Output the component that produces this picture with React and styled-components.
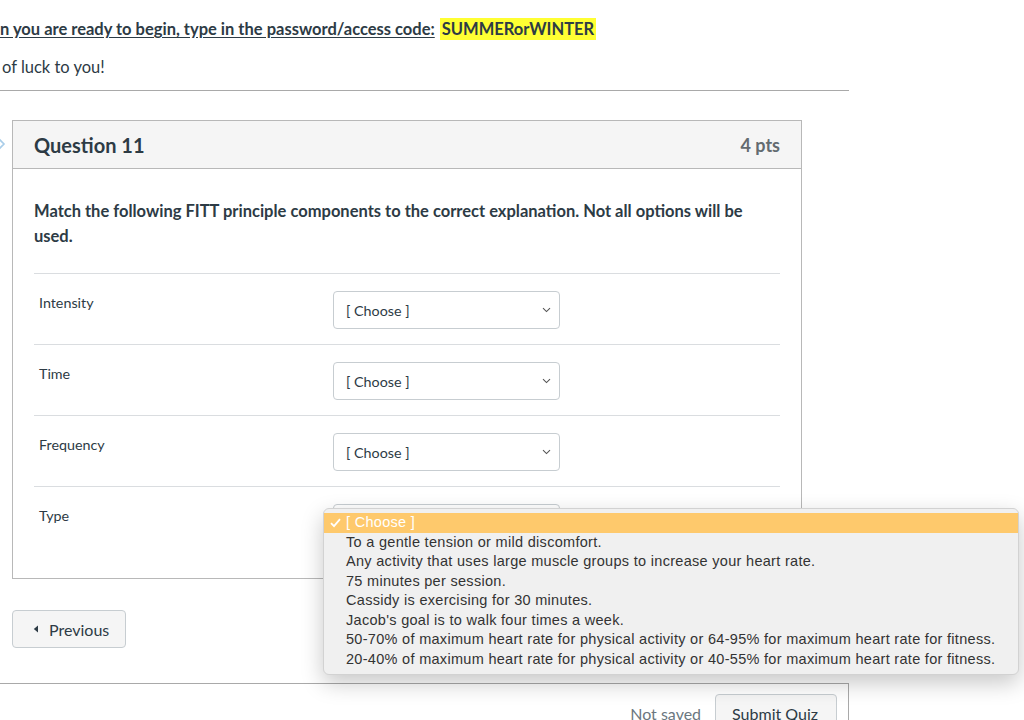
import React from "react";
import styled, { createGlobalStyle } from "styled-components";

const GlobalStyle = createGlobalStyle`
  html, body {
    margin: 0;
    padding: 0;
    background: #fff;
  }
  body {
    font-family: Lato, "Open Sans", "Liberation Sans", sans-serif;
    color: #2d3b45;
    overflow: hidden;
  }
`

const Page = styled.div`
  width: 849px;
  height: 720px;
  overflow: visible;
`

const Intro = styled.p`
  margin: 17px 0 0;
  font-size: 16.5px;
  line-height: 24px;
  font-weight: 700;
  white-space: nowrap;
`

const Underlined = styled.span`
  text-decoration: underline;
  text-underline-offset: 2px;
`

const Highlight = styled.span`
  background: #ffff33;
  padding: 1px 2px;
  margin-left: 5px;
`

const Luck = styled.p`
  margin: 14px 0 0;
  padding-left: 2px;
  font-size: 16.5px;
  line-height: 24px;
`

const Rule = styled.hr`
  margin: 11px 0 0;
  border: 0;
  border-top: 1px solid #a9a9a9;
`

const Card = styled.section`
  position: relative;
  margin: 29px 0 0 12px;
  width: 790px;
  box-sizing: border-box;
  border: 1px solid #b8b8b8;
`

const FlagMark = styled.svg`
  position: absolute;
  left: -17px;
  top: 15px;
`

const Header = styled.header`
  display: flex;
  align-items: center;
  justify-content: space-between;
  height: 47px;
  padding: 0 21px;
  background: #f5f5f5;
  border-bottom: 1px solid #b8b8b8;
`

const Title = styled.h2`
  margin: 0;
  font-size: 20px;
  font-weight: 700;
  color: #2d3b45;
`

const Points = styled.span`
  font-size: 18px;
  font-weight: 700;
  color: #636b70;
`

const Body = styled.div`
  padding: 30px 21px 21px;
`

const Prompt = styled.p`
  margin: 0 0 24px;
  font-size: 16.5px;
  line-height: 25px;
  font-weight: 700;
  padding-right: 20px;
`

const Row = styled.div`
  position: relative;
  display: flex;
  align-items: flex-start;
  box-sizing: border-box;
  height: 71px;
  padding: 17px 0 16px 5px;
  border-top: 1px solid #dadde0;
`

const Label = styled.div`
  width: 294px;
  padding-top: 2px;
  font-size: 14.3px;
  line-height: 20px;
`

const Select = styled.div`
  position: relative;
  display: flex;
  align-items: center;
  justify-content: space-between;
  box-sizing: border-box;
  width: 227px;
  height: 38px;
  padding: 0 8px 0 12px;
  border: 1px solid #c7cdd1;
  border-radius: 4px;
  background: #fff;
  font-size: 14.3px;
`

const Value = styled.span`
  visibility: ${(props) => (props.covered ? "hidden" : "visible")};
`

const Menu = styled.ul`
  position: absolute;
  left: -11px;
  top: 3px;
  z-index: 5;
  width: 696px;
  margin: 0;
  padding: 4px 0 5px;
  list-style: none;
  box-sizing: border-box;
  background: #f0f0f0;
  border: 1px solid #d2d2d2;
  border-radius: 6px;
  box-shadow: 0 8px 22px rgba(0, 0, 0, 0.22);
  font-family: "Liberation Sans", Arial, sans-serif;
  font-size: 14.5px;
  letter-spacing: 0.3px;
`

const Option = styled.li`
  position: relative;
  height: 19.5px;
  line-height: 19.5px;
  padding-left: 22px;
  white-space: nowrap;
  color: ${(props) => (props.selected ? "#fff" : "#333")};
  background: ${(props) => (props.selected ? "#fec96c" : "transparent")};
`

const Check = styled.svg`
  position: absolute;
  left: 6px;
  top: 5px;
`

const Nav = styled.div`
  margin: 31px 0 0 12px;
`

const Button = styled.button`
  display: inline-flex;
  align-items: center;
  gap: 10px;
  box-sizing: border-box;
  height: 38px;
  padding: 0 ${(props) => (props.wide ? "18px" : "16px")} 0 ${(props) => (props.wide ? "16px" : "20px")};
  background: #f5f5f5;
  border: 1px solid #c7cdd1;
  border-radius: 4px;
  font-family: Lato, "Open Sans", sans-serif;
  font-size: 16px;
  color: #2d3b45;
`

const Footer = styled.div`
  display: flex;
  align-items: flex-start;
  justify-content: flex-end;
  gap: 14px;
  height: 60px;
  margin-top: 35px;
  padding: 10px 11px 0 0;
  border-top: 1px solid #a9a9a9;
  border-right: 1px solid #a9a9a9;
`

const Status = styled.span`
  padding-top: 10px;
  font-size: 16px;
  color: #6b7780;
`

const Chevron = () => (
  <svg width="9" height="6" viewBox="0 0 9 6">
    <path d="M1 1.2 L4.5 4.6 L8 1.2" fill="none" stroke="#555" strokeWidth="1.1" />
  </svg>
)

const options = [
  "To a gentle tension or mild discomfort.",
  "Any activity that uses large muscle groups to increase your heart rate.",
  "75 minutes per session.",
  "Cassidy is exercising for 30 minutes.",
  "Jacob's goal is to walk four times a week.",
  "50-70% of maximum heart rate for physical activity or 64-95% for maximum heart rate for fitness.",
  "20-40% of maximum heart rate for physical activity or 40-55% for maximum heart rate for fitness.",
]

const rows = ["Intensity", "Time", "Frequency", "Type"]

export default function App() {
  return (
    <Page>
      <GlobalStyle />
      <Intro>
        <Underlined>n you are ready to begin, type in the password/access code:</Underlined>
        <Highlight>SUMMERorWINTER</Highlight>
      </Intro>
      <Luck>of luck to you!</Luck>
      <Rule />

      <Card>
        <FlagMark width="10" height="16" viewBox="0 0 10 16">
          <path d="M1 1 L8 8 L1 15" fill="none" stroke="#a9cde9" strokeWidth="1.6" />
        </FlagMark>
        <Header>
          <Title>Question 11</Title>
          <Points>4 pts</Points>
        </Header>
        <Body>
          <Prompt>
            Match the following FITT principle components to the correct explanation. Not all options will be used.
          </Prompt>
          {rows.map((name) => {
            const open = name === "Type"
            return (
              <Row key={name}>
                <Label>{name}</Label>
                <Select>
                  <Value covered={open}>[ Choose ]</Value>
                  <Chevron />
                  {open && (
                    <Menu>
                      <Option selected>
                        <Check width="11" height="10" viewBox="0 0 11 10">
                          <path d="M1 5.2 L4 8.2 L10 1.2" fill="none" stroke="#fff" strokeWidth="1.8" />
                        </Check>
                        [ Choose ]
                      </Option>
                      {options.map((o) => (
                        <Option key={o}>{o}</Option>
                      ))}
                    </Menu>
                  )}
                </Select>
              </Row>
            )
          })}
        </Body>
      </Card>

      <Nav>
        <Button>
          <svg width="6" height="8" viewBox="0 0 6 8">
            <path d="M5 0.5 L0.8 4 L5 7.5 Z" fill="#2d3b45" />
          </svg>
          Previous
        </Button>
      </Nav>

      <Footer>
        <Status>Not saved</Status>
        <Button wide>Submit Quiz</Button>
      </Footer>
    </Page>
  )
}
